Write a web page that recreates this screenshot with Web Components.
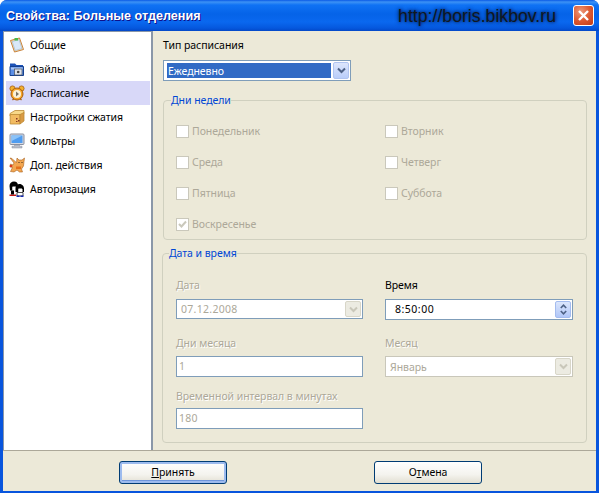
<!DOCTYPE html>
<html lang="ru">
<head>
<meta charset="utf-8">
<title>Свойства: Больные отделения</title>
<style>
  html, body { margin: 0; height: 100%; background: #fff; overflow: hidden; }
  body { font: 10.5px/13px "Noto Sans", "Liberation Sans", Arial, sans-serif; letter-spacing: -.05px; color: #000; }
</style>
</head>
<body>
<x-window caption="Свойства: Больные отделения" watermark="http://boris.bikbov.ru">
  <x-nav slot="nav">
    <x-nav-item icon="note">Общие</x-nav-item>
    <x-nav-item icon="folder">Файлы</x-nav-item>
    <x-nav-item icon="clock" selected>Расписание</x-nav-item>
    <x-nav-item icon="box">Настройки сжатия</x-nav-item>
    <x-nav-item icon="monitor">Фильтры</x-nav-item>
    <x-nav-item icon="cat">Доп. действия</x-nav-item>
    <x-nav-item icon="users">Авторизация</x-nav-item>
  </x-nav>

  <x-field style="height:21px">Тип расписания</x-field>
  <x-combo value="Ежедневно" highlight style="width:188px;height:21px;margin-bottom:13px"></x-combo>

  <x-group legend="Дни недели" inset="8" style="height:146px;margin-bottom:7px">
    <div style="display:grid;grid-template-columns:209px 1fr;grid-auto-rows:31px;padding:18px 0 0 13px">
      <x-check>Понедельник</x-check>
      <x-check>Вторник</x-check>
      <x-check>Среда</x-check>
      <x-check>Четверг</x-check>
      <x-check>Пятница</x-check>
      <x-check>Суббота</x-check>
      <x-check checked>Воскресенье</x-check>
    </div>
  </x-group>

  <x-group legend="Дата и время" inset="7" style="height:196px;margin-left:-1px">
    <div style="display:grid;grid-template-columns:187px 188px;column-gap:22px;padding:13px 0 0 14px">
      <x-field disabled style="height:26px;padding-top:6px">Дата</x-field>
      <x-field style="height:26px;padding-top:6px">Время</x-field>
      <x-combo value="07.12.2008" disabled style="height:20px;margin-bottom:18px;letter-spacing:.3px"></x-combo>
      <x-spin value="8:50:00" style="height:21px;margin-bottom:17px;letter-spacing:.5px"></x-spin>
      <x-field disabled style="height:19px">Дни месяца</x-field>
      <x-field disabled style="height:19px">Месяц</x-field>
      <x-textbox value="1" style="height:21px;margin-bottom:13px"></x-textbox>
      <x-combo value="Январь" muted disabled style="height:21px;margin-bottom:13px"></x-combo>
      <x-field disabled style="height:18px;grid-column:1">Временной интервал в минутах</x-field>
      <x-textbox value="180" style="height:21px;grid-column:1;letter-spacing:.3px"></x-textbox>
    </div>
  </x-group>

  <x-button slot="footer" focused><u>П</u>ринять</x-button>
  <x-button slot="footer">О<u>т</u>мена</x-button>
</x-window>

<script>
/********************************* icons ******************************************/
const ICONS = {
  note: `<path d="M1.5 3.5 10.5 1 14.5 12.5 5.5 15Z" fill="#f6e3b4" stroke="#c8803a"/><path d="M3.2 4.5 10 2.6 13 11.6 6.2 13.5Z" fill="#d9e8f8" stroke="#9ab4d0" stroke-width=".6"/><path d="M5.5 1h3.5v2.4H5.5Z" fill="#49b848"/>`,
  folder: `<path d="M1 2.5h5L7.5 4H14v3H1Z" fill="#1d52b8"/><path d="M1 5.5h13.5v9H1Z" fill="#5c8fe6" stroke="#15408f"/><path d="M2 6.5h11.5v2H2Z" fill="#a9c6f5"/><rect x="5.5" y="8" width="7.5" height="6" fill="#dfe3ea" stroke="#48505e" stroke-width=".7"/><circle cx="9.2" cy="11" r="1.3" fill="#444"/>`,
  clock: `<circle cx="3.5" cy="3.5" r="2.6" fill="#f3b12c" stroke="#a65e10" stroke-width=".8"/><circle cx="12.5" cy="3.5" r="2.6" fill="#f3b12c" stroke="#a65e10" stroke-width=".8"/><circle cx="8" cy="9" r="6" fill="#f7a326" stroke="#a65e10"/><circle cx="8" cy="9" r="4" fill="#fbf2d8"/><path d="M7 6.5v5l3-2.5Z" fill="#7c7466"/><path d="M3.5 15l1.5-1.5M12.5 15 11 13.5" stroke="#a65e10" stroke-width="1.2"/>`,
  box: `<path d="M1 4.5 6 1.5h9v3L10 7H1Z" fill="#f8d98a" stroke="#bd8a35" stroke-width=".8"/><path d="M1.2 5.5H11v9.5H1.2Z" fill="#f2bb62" stroke="#bd8a35" stroke-width=".8"/><path d="M11 5.5 15 3.5v8.5L11 15Z" fill="#d99a44" stroke="#bd8a35" stroke-width=".8"/><path d="M7 9h1.5v1.5H7ZM9 11h1.5v1.5H9ZM7 12h1.5v1H7Z" fill="#8a3a22"/>`,
  monitor: `<rect x="1" y="1" width="14" height="10.5" rx="1" fill="#d4d8e2" stroke="#8a90a0"/><rect x="2.5" y="2.5" width="11" height="7.5" fill="#4f9cf0"/><path d="M2.5 2.5h11L2.5 8Z" fill="#8cc3f8"/><path d="M5.5 12h5v1.2h2.5V15H3v-1.8h2.5Z" fill="#b9bdc9" stroke="#8a90a0" stroke-width=".5"/>`,
  cat: `<path d="M1 1 3 3.5 5 6 4 8 1.5 7 1 10 3.5 10.5 1.5 14.5 5 15 8 13l2.5 2h3l-1-3 2-3L15 4.5 15.5 1 13 3H10L8 1 7.5 5.5 5.5 4 3 1.5Z" fill="#f2a650" stroke="#a8621f" stroke-width=".6"/><path d="M9.5 5.5h1M12.5 5.5h1" stroke="#3a2a18"/><path d="M7 9.5h5v2.5H7Z" fill="#e3701c"/><path d="M.8 8h2.4v2H.8Z" fill="#d93a20"/>`,
  users: `<path d="M.5 5C.5 2 2.5.5 5 .5S9 2 9 4.5V10H7.5V6H3.5V9.5H1Z" fill="#000"/><path d="M3.5 5.5h3.5v4H3.5Z" fill="#fff"/><path d="M6.5 7C6.5 4 8.5 3 10.5 3S15 4.5 15 7.5V11H13.5V8H9.5v3H6.5Z" fill="#000"/><path d="M9.5 7.5h3.5v3.5H9.5Z" fill="#fff"/><path d="M.5 13.5H7V15H.5Z" fill="#c81414"/><path d="M8 11.5h6V15H8Z" fill="#fff" stroke="#000" stroke-width=".7"/><path d="M7.5 14.5h3V16h-3ZM11.5 14.5h3V16h-3Z" fill="#1428b4"/><path d="M2 9.5h3v4H2Z" fill="#000"/>`
};
const CHEVRON = `<svg width="9" height="7" viewBox="0 0 9 7"><path d="M1 1.5 4.5 5 8 1.5" fill="none" stroke="currentColor" stroke-width="2"/></svg>`;

function shadow(el, html) {
  el.attachShadow({ mode: 'open' });
  el.shadowRoot.innerHTML = html;
}

/********************************* XWindow ******************************************/
class XWindow extends HTMLElement {
  connectedCallback() {
    shadow(this, `
    <style>
      :host { display: flex; flex-direction: column; width: 599px; height: 493px; box-sizing: border-box;
              border-radius: 7px 7px 0 0; overflow: hidden; background: #0855dd; }
      .title { flex: none; height: 31px; display: flex; align-items: center; padding: 0 5px 1px 6px; box-sizing: border-box;
               background: linear-gradient(#0a5ae6 0, #3c92f5 2px, #0f72f4 5px, #0563e8 14px, #0a68ef 22px, #0558de 28px, #0348c8 31px); }
      .caption { color: #fff; font: bold 12.6px "Liberation Sans", Arial, sans-serif; letter-spacing: 0; padding-top: 1px; text-shadow: 1px 1px #0f1089; white-space: nowrap; }
      .mark { margin-left: auto; margin-right: 17px; padding-top: 3px; color: #101820; font: 17.7px "Liberation Sans", Arial, sans-serif; letter-spacing: 0;
              text-shadow: 0 0 3px #01256e, 0 0 4px #01256e; white-space: nowrap; }
      .close { flex: none; width: 21px; height: 21px; box-sizing: border-box; border: 1px solid #fff; border-radius: 3px;
               background: radial-gradient(circle at 35% 30%, #ec9a7c, #dd5a32 50%, #c23a14); display: flex; align-items: center; justify-content: center; }
      .client { flex: 1; min-height: 0; display: flex; flex-direction: column; margin: 0 3px 2px 3px; background: #ece9d8; }
      .top { flex: 1; min-height: 0; display: flex; border-bottom: 1px solid #aca899; }
      .main { flex: 1; min-width: 0; padding: 8px 9px 0 10px; }
      .foot { flex: none; height: 40px; display: flex; padding: 10px 0 0 116px; box-sizing: border-box; gap: 147px; }
    </style>
    <div class="title">
      <span class="caption">${this.getAttribute('caption')}</span>
      <span class="mark">${this.getAttribute('watermark')}</span>
      <span class="close"><svg width="13" height="13" viewBox="0 0 13 13"><path d="M2 2 11 11M11 2 2 11" stroke="#fff" stroke-width="2.4"/></svg></span>
    </div>
    <div class="client">
      <div class="top">
        <slot name="nav"></slot>
        <div class="main"><slot></slot></div>
      </div>
      <div class="foot"><slot name="footer"></slot></div>
    </div>`);
  }
}

/********************************* Nav ******************************************/
class XNav extends HTMLElement {
  constructor() {
    super();
    shadow(this, `
    <style>
      :host { display: block; flex: none; width: 144px; background: #fff; padding: 1px 1px 0 2px;
              border: 1px solid #8a97a8; border-right-width: 2px; border-bottom: 0; }
    </style>
    <slot></slot>`);
  }
}

class XNavItem extends HTMLElement {
  connectedCallback() {
    shadow(this, `
    <style>
      :host { display: flex; align-items: center; height: 24px; padding-left: 3px; gap: 5px; }
      :host([selected]) { background: #d8d8f8; }
      svg { flex: none; }
      span { white-space: nowrap; }
    </style>
    <svg width="16" height="16" viewBox="0 0 16 16">${ICONS[this.getAttribute('icon')]}</svg><span><slot></slot></span>`);
  }
}

/********************************* Group ******************************************/
class XGroup extends HTMLElement {
  connectedCallback() {
    shadow(this, `
    <style>
      :host { display: block; box-sizing: border-box; position: relative; }
      .frame { position: absolute; inset: 6px 0 0 0; border: 1px solid #d0d0bf; border-radius: 4px; box-sizing: border-box; }
      .legend { position: relative; display: block; width: fit-content; margin-left: ${this.getAttribute('inset')}px; background: #ece9d8; color: #0046d5; line-height: 13px; }
    </style>
    <div class="frame"></div>
    <div class="legend">${this.getAttribute('legend')}</div>
    <div style="position:relative"><slot></slot></div>`);
  }
}

/********************************* Form bits ******************************************/
class XField extends HTMLElement {
  constructor() {
    super();
    shadow(this, `
    <style>
      :host { display: block; box-sizing: border-box; line-height: 13px; white-space: nowrap; }
      :host([disabled]) { color: #aca899; text-shadow: 1px 1px #fff; }
    </style>
    <slot></slot>`);
  }
}

class XCheck extends HTMLElement {
  constructor() {
    super();
    shadow(this, `
    <style>
      :host { display: flex; align-items: flex-start; gap: 3px; color: #aca899; line-height: 13px; }
      .box { flex: none; width: 13px; height: 13px; box-sizing: border-box; border: 1px solid #cac8bb; background: #fff; display: flex; }
      svg { display: none; }
      :host([checked]) svg { display: block; }
    </style>
    <span class="box"><svg width="11" height="11" viewBox="0 0 11 11"><path d="M2 5 4.5 7.5 9 2.5" fill="none" stroke="#cac8bb" stroke-width="2"/></svg></span><span><slot></slot></span>`);
  }
}

class XCombo extends HTMLElement {
  connectedCallback() {
    shadow(this, `
    <style>
      :host { display: flex; box-sizing: border-box; border: 1px solid #7f9db9; background: #fff; align-items: stretch; padding: 1px; }
      :host([muted]) { border-color: #c9c7ba; }
      .val { flex: 1; min-width: 0; margin: 1px 2px; padding-left: 1px; line-height: 14px; color: #aca899; display: flex; align-items: center; }
      :host([highlight]) .val { background: #316ac5; color: #fff; }
      .btn { flex: none; width: 16px; display: flex; align-items: center; justify-content: center; box-sizing: border-box; border: 1px solid #b0c4f0; border-radius: 2px;
             background: linear-gradient(#dde6fc, #b9cdf9); color: #4d6185; }
      :host([disabled]) .btn { border-color: #d8d6c8; background: #ecebe2; color: #c9c7ba; }
    </style>
    <span class="val">${this.getAttribute('value')}</span><span class="btn">${CHEVRON}</span>`);
  }
}

class XSpin extends HTMLElement {
  connectedCallback() {
    shadow(this, `
    <style>
      :host { display: flex; box-sizing: border-box; border: 1px solid #7f9db9; background: #fff; align-items: stretch; padding: 1px; }
      .val { flex: 1; padding-left: 8px; display: flex; align-items: center; }
      .btn { flex: none; width: 16px; display: flex; flex-direction: column; align-items: center; justify-content: space-evenly; box-sizing: border-box; border: 1px solid #a4bcef; border-radius: 2px;
             background: linear-gradient(#dbe6fc, #b1c7f8); color: #4d6185; }
      svg { display: block; }
    </style>
    <span class="val">${this.getAttribute('value')}</span>
    <span class="btn">
      <svg width="7" height="5" viewBox="0 0 7 5"><path d="M.8 4 3.5 1.2 6.2 4" fill="none" stroke="currentColor" stroke-width="1.6"/></svg>
      <svg width="7" height="5" viewBox="0 0 7 5"><path d="M.8 1 3.5 3.8 6.2 1" fill="none" stroke="currentColor" stroke-width="1.6"/></svg>
    </span>`);
  }
}

class XTextbox extends HTMLElement {
  connectedCallback() {
    shadow(this, `
    <style>
      :host { display: flex; align-items: center; box-sizing: border-box; border: 1px solid #7f9db9; background: #fff; color: #aca899; padding-left: 2px; }
    </style>
    ${this.getAttribute('value')}`);
  }
}

class XButton extends HTMLElement {
  constructor() {
    super();
    shadow(this, `
    <style>
      :host { display: flex; align-items: center; justify-content: center; box-sizing: border-box; width: 108px; height: 23px;
              border: 1px solid #003c74; border-radius: 3px;
              background: linear-gradient(#fff, #f4f3ee 60%, #e2dfd2); }
      :host([focused]) { box-shadow: inset 0 0 0 2px #9dbbee, inset 0 -1px 0 2px #6f96dc; }
    </style>
    <slot></slot>`);
  }
}

// everything has to be registered before the page is shown
customElements.define('x-window', XWindow);
customElements.define('x-nav', XNav);
customElements.define('x-nav-item', XNavItem);
customElements.define('x-group', XGroup);
customElements.define('x-field', XField);
customElements.define('x-check', XCheck);
customElements.define('x-combo', XCombo);
customElements.define('x-spin', XSpin);
customElements.define('x-textbox', XTextbox);
customElements.define('x-button', XButton);
</script>
</body>
</html>
